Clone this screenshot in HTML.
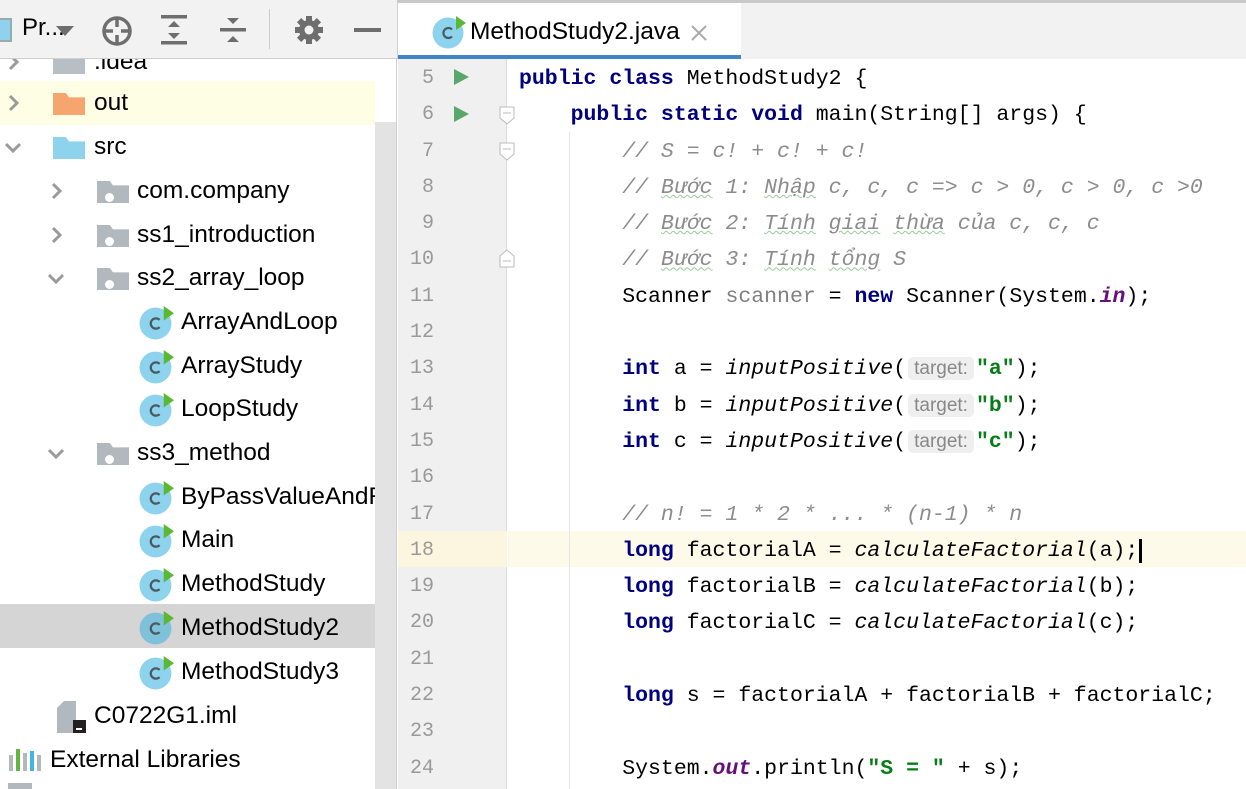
<!DOCTYPE html>
<html><head><meta charset="utf-8">
<style>
*{margin:0;padding:0;box-sizing:border-box}
body{width:1246px;height:789px;overflow:hidden;background:#fff;position:relative;font-family:"Liberation Sans",sans-serif}
.abs{position:absolute}
#left{position:absolute;left:0;top:0;width:397px;height:789px;background:#fff;overflow:hidden}
#tb{position:absolute;left:0;top:0;width:397px;height:59px;background:#f2f2f2;border-bottom:1px solid #d0d0d0;z-index:5}
#rows{position:absolute;left:0;top:2px;width:397px;height:789px}
.row{position:absolute;left:0;width:375px;height:44px;font-size:24.5px;color:#000;line-height:44px;white-space:nowrap;overflow:hidden}
.row span.t{position:absolute;top:0}
.arr{position:absolute;top:13px;width:18px;height:18px}
.fold{position:absolute;top:12px;width:32px;height:22px}
.cls{position:absolute;top:5px;width:35px;height:35px}
#sb{position:absolute;left:375px;top:122px;width:22px;height:667px;background:#e3e3e3}
#tabbar{position:absolute;left:397px;top:0;width:849px;height:59px;background:#f2f2f2;border-top:3px solid #c9c9c9;border-left:1px solid #d0d0d0}
#tab{position:absolute;left:0;top:0;width:343px;height:56px;background:#fff;border-bottom:4px solid #4083c9}
#gutter{position:absolute;left:398px;top:59px;width:109px;height:730px;background:#f0f0f0;border-right:1px solid #dcdcdc}
.ln{position:absolute;left:398px;width:36px;text-align:right;font-family:"Liberation Mono",monospace;font-size:20px;color:#999;line-height:36.3px}
.code{position:absolute;left:519px;font-family:"Liberation Mono",monospace;font-size:21.5px;line-height:36.3px;color:#000;white-space:pre}
.k{color:#000080;font-weight:bold}
.c{color:#8c8c8c;font-style:italic}
.i{font-style:italic}
.s{color:#067d17;font-weight:bold}
.g{color:#808080}
.p{color:#660e7a;font-weight:bold;font-style:italic}
.hint{font-family:"Liberation Sans",sans-serif;font-size:19px;color:#888;background:#efefef;border-radius:5px;padding:1px 6px;margin:0 2px;font-style:normal;font-weight:normal}
.wv{text-decoration:underline wavy #9c9;text-decoration-thickness:1px}
.run{position:absolute;left:454px;width:0;height:0;border-left:15px solid #59a869;border-top:8px solid transparent;border-bottom:8px solid transparent}
</style></head><body>

<div id="left">
 <div id="tb">
  <div class="abs" style="left:0;top:18px;width:12px;height:24px;background:#8fd1ef;border:2px solid #9aa;border-left:none"></div>
  <div class="abs" style="left:22px;top:14px;font-size:24px">Pr...</div>
  <div class="abs" style="left:56px;top:26px;width:0;height:0;border-left:9px solid transparent;border-right:9px solid transparent;border-top:10px solid #6e6e6e"></div>
  <svg class="abs" style="left:100px;top:14px" width="34" height="34" viewBox="0 0 34 34"><circle cx="17" cy="17" r="13" fill="none" stroke="#6e6e6e" stroke-width="3.5"/><path d="M17 4v9M17 21v9M4 17h9M21 17h9" stroke="#6e6e6e" stroke-width="3.5"/></svg>
  <svg class="abs" style="left:160px;top:14px" width="30" height="32" viewBox="0 0 30 32"><rect x="1" y="1" width="26" height="3.5" fill="#6e6e6e"/><rect x="1" y="27" width="26" height="3.5" fill="#6e6e6e"/><path d="M8 13l6-6 6 6zM8 19l6 6 6-6z" fill="#6e6e6e"/></svg>
  <svg class="abs" style="left:219px;top:14px" width="30" height="32" viewBox="0 0 30 32"><rect x="1" y="14" width="26" height="3.5" fill="#6e6e6e"/><path d="M8 4l6 6 6-6zM8 28l6-6 6 6z" fill="#6e6e6e"/></svg>
  <div class="abs" style="left:269px;top:9px;width:1px;height:40px;background:#ccc"></div>
  <svg class="abs" style="left:293px;top:14px" width="32" height="32" viewBox="0 0 32 32"><g fill="#6e6e6e"><circle cx="16" cy="16" r="10"/><rect x="13" y="2" width="6" height="28"/><rect x="2" y="13" width="28" height="6"/><rect x="13" y="2" width="6" height="28" transform="rotate(45 16 16)"/><rect x="13" y="2" width="6" height="28" transform="rotate(-45 16 16)"/></g><circle cx="16" cy="16" r="4.5" fill="#f2f2f2"/></svg>
  <div class="abs" style="left:354px;top:28px;width:27px;height:4px;background:#6e6e6e"></div>
 </div>

 <div id="rows">
 <div class="row" style="top:38px"><svg class="arr" style="left:5px" viewBox="0 0 18 18"><path d="M5 2l7 7-7 7" fill="none" stroke="#9a9a9a" stroke-width="3"/></svg><div class="fold" style="left:53px;background:#b7bec4"></div><span class="t" style="left:94px">.idea</span></div>
 <div class="row" style="top:79px;background:#fefee5"><svg class="arr" style="left:5px" viewBox="0 0 18 18"><path d="M5 2l7 7-7 7" fill="none" stroke="#9a9a9a" stroke-width="3"/></svg><div class="fold" style="left:53px;background:#f6a56f;clip-path:polygon(0 0,40% 0,50% 20%,100% 20%,100% 100%,0 100%)"></div><span class="t" style="left:94px">out</span></div>
 <div class="row" style="top:123px"><svg class="arr" style="left:4px" viewBox="0 0 18 18"><path d="M2 6l7 7 7-7" fill="none" stroke="#9a9a9a" stroke-width="3"/></svg><div class="fold" style="left:53px;background:#8ed3ed;clip-path:polygon(0 0,40% 0,50% 20%,100% 20%,100% 100%,0 100%)"></div><span class="t" style="left:94px">src</span></div>

 <div class="row" style="top:167px"><svg class="arr" style="left:48px" viewBox="0 0 18 18"><path d="M5 2l7 7-7 7" fill="none" stroke="#9a9a9a" stroke-width="3"/></svg><div class="fold" style="left:97px;background:#b1b8be;clip-path:polygon(0 0,40% 0,50% 20%,100% 20%,100% 100%,0 100%)"></div><div class="abs" style="left:105px;top:24px;width:9px;height:9px;border-radius:50%;background:#fff"></div><span class="t" style="left:137px">com.company</span></div>
 <div class="row" style="top:211px"><svg class="arr" style="left:48px" viewBox="0 0 18 18"><path d="M5 2l7 7-7 7" fill="none" stroke="#9a9a9a" stroke-width="3"/></svg><div class="fold" style="left:97px;background:#b1b8be;clip-path:polygon(0 0,40% 0,50% 20%,100% 20%,100% 100%,0 100%)"></div><div class="abs" style="left:105px;top:24px;width:9px;height:9px;border-radius:50%;background:#fff"></div><span class="t" style="left:137px">ss1_introduction</span></div>
 <div class="row" style="top:254px"><svg class="arr" style="left:47px" viewBox="0 0 18 18"><path d="M2 6l7 7 7-7" fill="none" stroke="#9a9a9a" stroke-width="3"/></svg><div class="fold" style="left:97px;background:#b1b8be;clip-path:polygon(0 0,40% 0,50% 20%,100% 20%,100% 100%,0 100%)"></div><div class="abs" style="left:105px;top:24px;width:9px;height:9px;border-radius:50%;background:#fff"></div><span class="t" style="left:137px">ss2_array_loop</span></div>

 <div class="row" style="top:298px"><svg class="cls" style="left:139px" viewBox="0 0 34 34"><circle cx="16" cy="18" r="15.5" fill="#8ed3ed"/><path d="M20 14.5a5 5 0 1 0 0 7" fill="none" stroke="#4a5a63" stroke-width="2.2"/><path d="M24 1v14l10-7z" fill="#5bb832"/></svg><span class="t" style="left:181px">ArrayAndLoop</span></div>
 <div class="row" style="top:342px"><svg class="cls" style="left:139px" viewBox="0 0 34 34"><circle cx="16" cy="18" r="15.5" fill="#8ed3ed"/><path d="M20 14.5a5 5 0 1 0 0 7" fill="none" stroke="#4a5a63" stroke-width="2.2"/><path d="M24 1v14l10-7z" fill="#5bb832"/></svg><span class="t" style="left:181px">ArrayStudy</span></div>
 <div class="row" style="top:385px"><svg class="cls" style="left:139px" viewBox="0 0 34 34"><circle cx="16" cy="18" r="15.5" fill="#8ed3ed"/><path d="M20 14.5a5 5 0 1 0 0 7" fill="none" stroke="#4a5a63" stroke-width="2.2"/><path d="M24 1v14l10-7z" fill="#5bb832"/></svg><span class="t" style="left:181px">LoopStudy</span></div>
 <div class="row" style="top:429px"><svg class="arr" style="left:47px" viewBox="0 0 18 18"><path d="M2 6l7 7 7-7" fill="none" stroke="#9a9a9a" stroke-width="3"/></svg><div class="fold" style="left:97px;background:#b1b8be;clip-path:polygon(0 0,40% 0,50% 20%,100% 20%,100% 100%,0 100%)"></div><div class="abs" style="left:105px;top:24px;width:9px;height:9px;border-radius:50%;background:#fff"></div><span class="t" style="left:137px">ss3_method</span></div>
 <div class="row" style="top:473px"><svg class="cls" style="left:139px" viewBox="0 0 34 34"><circle cx="16" cy="18" r="15.5" fill="#8ed3ed"/><path d="M20 14.5a5 5 0 1 0 0 7" fill="none" stroke="#4a5a63" stroke-width="2.2"/><path d="M24 1v14l10-7z" fill="#5bb832"/></svg><span class="t" style="left:181px">ByPassValueAndRef</span></div>
 <div class="row" style="top:516px"><svg class="cls" style="left:139px" viewBox="0 0 34 34"><circle cx="16" cy="18" r="15.5" fill="#8ed3ed"/><path d="M20 14.5a5 5 0 1 0 0 7" fill="none" stroke="#4a5a63" stroke-width="2.2"/><path d="M24 1v14l10-7z" fill="#5bb832"/></svg><span class="t" style="left:181px">Main</span></div>
 <div class="row" style="top:560px"><svg class="cls" style="left:139px" viewBox="0 0 34 34"><circle cx="16" cy="18" r="15.5" fill="#8ed3ed"/><path d="M20 14.5a5 5 0 1 0 0 7" fill="none" stroke="#4a5a63" stroke-width="2.2"/><path d="M24 1v14l10-7z" fill="#5bb832"/></svg><span class="t" style="left:181px">MethodStudy</span></div>
 <div class="row" style="top:602px;background:#d5d5d5;width:397px"><svg class="cls" style="left:139px;top:6px" viewBox="0 0 34 34"><circle cx="16" cy="18" r="15.5" fill="#7fc1d9"/><path d="M20 14.5a5 5 0 1 0 0 7" fill="none" stroke="#4a5a63" stroke-width="2.2"/><path d="M24 1v14l10-7z" fill="#5bb832"/></svg><span class="t" style="left:181px;top:2px">MethodStudy2</span></div>
 <div class="row" style="top:648px"><svg class="cls" style="left:139px" viewBox="0 0 34 34"><circle cx="16" cy="18" r="15.5" fill="#8ed3ed"/><path d="M20 14.5a5 5 0 1 0 0 7" fill="none" stroke="#4a5a63" stroke-width="2.2"/><path d="M24 1v14l10-7z" fill="#5bb832"/></svg><span class="t" style="left:181px">MethodStudy3</span></div>
 <div class="row" style="top:692px"><svg class="abs" style="left:57px;top:6px" width="30" height="34" viewBox="0 0 30 34"><path d="M0 8l7-7h12v32H0z" fill="#b1b8be"/><rect x="16" y="20" width="13" height="13" fill="#231f20"/><rect x="19" y="28" width="6" height="2" fill="#fff"/></svg><span class="t" style="left:94px">C0722G1.iml</span></div>
 <div class="row" style="top:736px"><svg class="abs" style="left:8px;top:11px" width="34" height="22" viewBox="0 0 34 22"><rect x="1" y="6" width="4" height="16" fill="#b1b8be"/><rect x="8" y="0" width="4" height="22" fill="#62b543"/><rect x="15" y="4" width="4" height="18" fill="#b1b8be"/><rect x="22" y="2" width="4" height="20" fill="#40b6e0"/><rect x="29" y="6" width="4" height="16" fill="#b1b8be"/></svg><span class="t" style="left:50px">External Libraries</span></div>
 </div>
 <div class="abs" style="left:8px;top:783px;width:24px;height:6px;background:#b1b8be"></div>
 <div id="sb"></div>
 <div class="abs" style="left:396px;top:0;width:1px;height:789px;background:#d0d0d0"></div>
</div>

<div id="tabbar">
 <div id="tab">
  <svg class="abs" style="left:34px;top:12px" width="34" height="34" viewBox="0 0 34 34"><circle cx="16" cy="18" r="15.5" fill="#8ed3ed"/><path d="M20 14.5a5 5 0 1 0 0 7" fill="none" stroke="#4a5a63" stroke-width="2.2"/><path d="M24 1v14l10-7z" fill="#5bb832"/></svg>
  <div class="abs" style="left:72px;top:15px;font-size:24.5px;color:#000">MethodStudy2.java</div>
  <svg class="abs" style="left:293px;top:22px" width="16" height="16" viewBox="0 0 16 16"><path d="M1 1l14 14M15 1L1 15" stroke="#aaa" stroke-width="2"/></svg>
 </div>
</div>

<div id="gutter"></div>
<div class="abs" style="left:398px;top:531px;width:109px;height:36px;background:#fcf6e1"></div>
<div class="abs" style="left:508px;top:531px;width:738px;height:36px;background:#fefae9"></div>
<div class="abs" style="left:569px;top:132px;width:1px;height:657px;background:#e6e6e6"></div>

<div class="run" style="top:69px"></div>
<div class="run" style="top:106px"></div>
<svg class="abs" style="left:499px;top:106px" width="16" height="20" viewBox="0 0 16 20"><path d="M1 1h14v11l-7 6-7-6z" fill="#fff" stroke="#bbb"/><path d="M4 7h8" stroke="#bbb"/></svg>
<svg class="abs" style="left:499px;top:142px" width="16" height="20" viewBox="0 0 16 20"><path d="M1 1h14v11l-7 6-7-6z" fill="#fff" stroke="#bbb"/><path d="M4 7h8" stroke="#bbb"/></svg>
<svg class="abs" style="left:499px;top:248px" width="16" height="20" viewBox="0 0 16 20"><path d="M1 19h14V8L8 2 1 8z" fill="#fff" stroke="#bbb"/><path d="M4 13h8" stroke="#bbb"/></svg>

<div class="ln" style="top:61px">5<br>6<br>7<br>8<br>9<br>10<br>11<br>12<br>13<br>14<br>15<br>16<br>17<br>18<br>19<br>20<br>21<br>22<br>23<br>24</div>

<div class="code" style="top:61px"><span class="k">public class</span> MethodStudy2 {
    <span class="k">public static void</span> main(String[] args) {
        <span class="c">// S = c! + c! + c!</span>
        <span class="c">// <span class="wv">Bước</span> 1: <span class="wv">Nhập</span> c, c, c =&gt; c &gt; 0, c &gt; 0, c &gt;0</span>
        <span class="c">// <span class="wv">Bước</span> 2: <span class="wv">Tính</span> <span class="wv">giai</span> <span class="wv">thừa</span> của c, c, c</span>
        <span class="c">// <span class="wv">Bước</span> 3: <span class="wv">Tính</span> <span class="wv">tổng</span> S</span>
        Scanner <span class="g">scanner</span> = <span class="k">new</span> Scanner(System.<span class="p">in</span>);

        <span class="k">int</span> a = <span class="i">inputPositive</span>(<span class="hint">target:</span><span class="s">"a"</span>);
        <span class="k">int</span> b = <span class="i">inputPositive</span>(<span class="hint">target:</span><span class="s">"b"</span>);
        <span class="k">int</span> c = <span class="i">inputPositive</span>(<span class="hint">target:</span><span class="s">"c"</span>);

        <span class="c">// n! = 1 * 2 * ... * (n-1) * n</span>
        <span class="k">long</span> factorialA = <span class="i">calculateFactorial</span>(a);<span style="border-left:3px solid #000;margin-left:1px"></span>
        <span class="k">long</span> factorialB = <span class="i">calculateFactorial</span>(b);
        <span class="k">long</span> factorialC = <span class="i">calculateFactorial</span>(c);

        <span class="k">long</span> s = factorialA + factorialB + factorialC;

        System.<span class="p">out</span>.println(<span class="s">"S = "</span> + s);
</div>
</body></html>
